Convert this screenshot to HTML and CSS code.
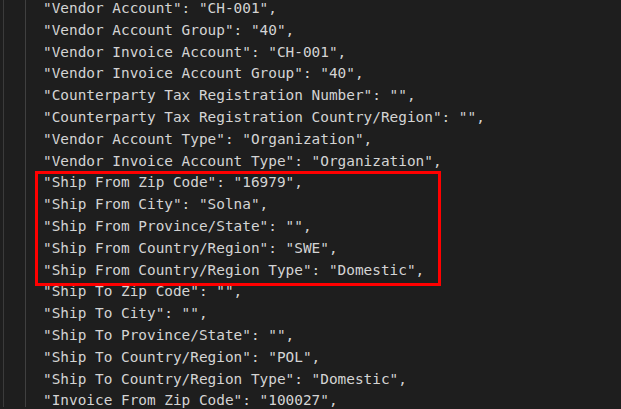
FILE: index.html
```html
<!DOCTYPE html>
<html lang="en">
<head>
	<meta charset="utf-8">
	<title>vendor.json</title>
	<link rel="stylesheet" href="styles.css">
</head>
<body>
	<div class="editor">
		<div class="scope">
			<div class="code">
				<div class="line">"Vendor Account": "CH-001",</div>
				<div class="line">"Vendor Account Group": "40",</div>
				<div class="line">"Vendor Invoice Account": "CH-001",</div>
				<div class="line">"Vendor Invoice Account Group": "40",</div>
				<div class="line">"Counterparty Tax Registration Number": "",</div>
				<div class="line">"Counterparty Tax Registration Country/Region": "",</div>
				<div class="line">"Vendor Account Type": "Organization",</div>
				<div class="line">"Vendor Invoice Account Type": "Organization",</div>
				<div class="mark">
					<div class="line">"Ship From Zip Code": "16979",</div>
					<div class="line">"Ship From City": "Solna",</div>
					<div class="line">"Ship From Province/State": "",</div>
					<div class="line">"Ship From Country/Region": "SWE",</div>
					<div class="line">"Ship From Country/Region Type": "Domestic",</div>
					<div class="mark-box"></div>
				</div>
				<div class="line">"Ship To Zip Code": "",</div>
				<div class="line">"Ship To City": "",</div>
				<div class="line">"Ship To Province/State": "",</div>
				<div class="line">"Ship To Country/Region": "POL",</div>
				<div class="line">"Ship To Country/Region Type": "Domestic",</div>
				<div class="line">"Invoice From Zip Code": "100027",</div>
			</div>
		</div>
	</div>
</body>
</html>
```
FILE: styles.css
```css
*{
	margin: 0;
	padding: 0;
}

html, body{
	height: 100%;
	overflow: hidden;
}
body{
	background: #1e1e1e;
	color: #d4d4d4;
	font-family: "DejaVu Sans Mono", "Liberation Mono", monospace;
	font-size: 14.4px;
	line-height: 21.8px;
}

/* indent guides */
.editor{
	height: 100%;
	margin-left: 3px;
	border-left: 1px solid #3b3b3b;
	padding-left: 21px;
}
.scope{
	height: 100%;
	border-left: 1px solid #404040;
	padding-left: 17px;
}

.code{
	margin-top: -2px;
}
.line{
	white-space: pre;
}

/* red annotation round the ship-from block */
.mark{
	position: relative;
}
.mark-box{
	position: absolute;
	top: -1px;
	left: -8px;
	width: 400px;
	bottom: -5px;
	border: 3px solid #ff0000;
}
```
